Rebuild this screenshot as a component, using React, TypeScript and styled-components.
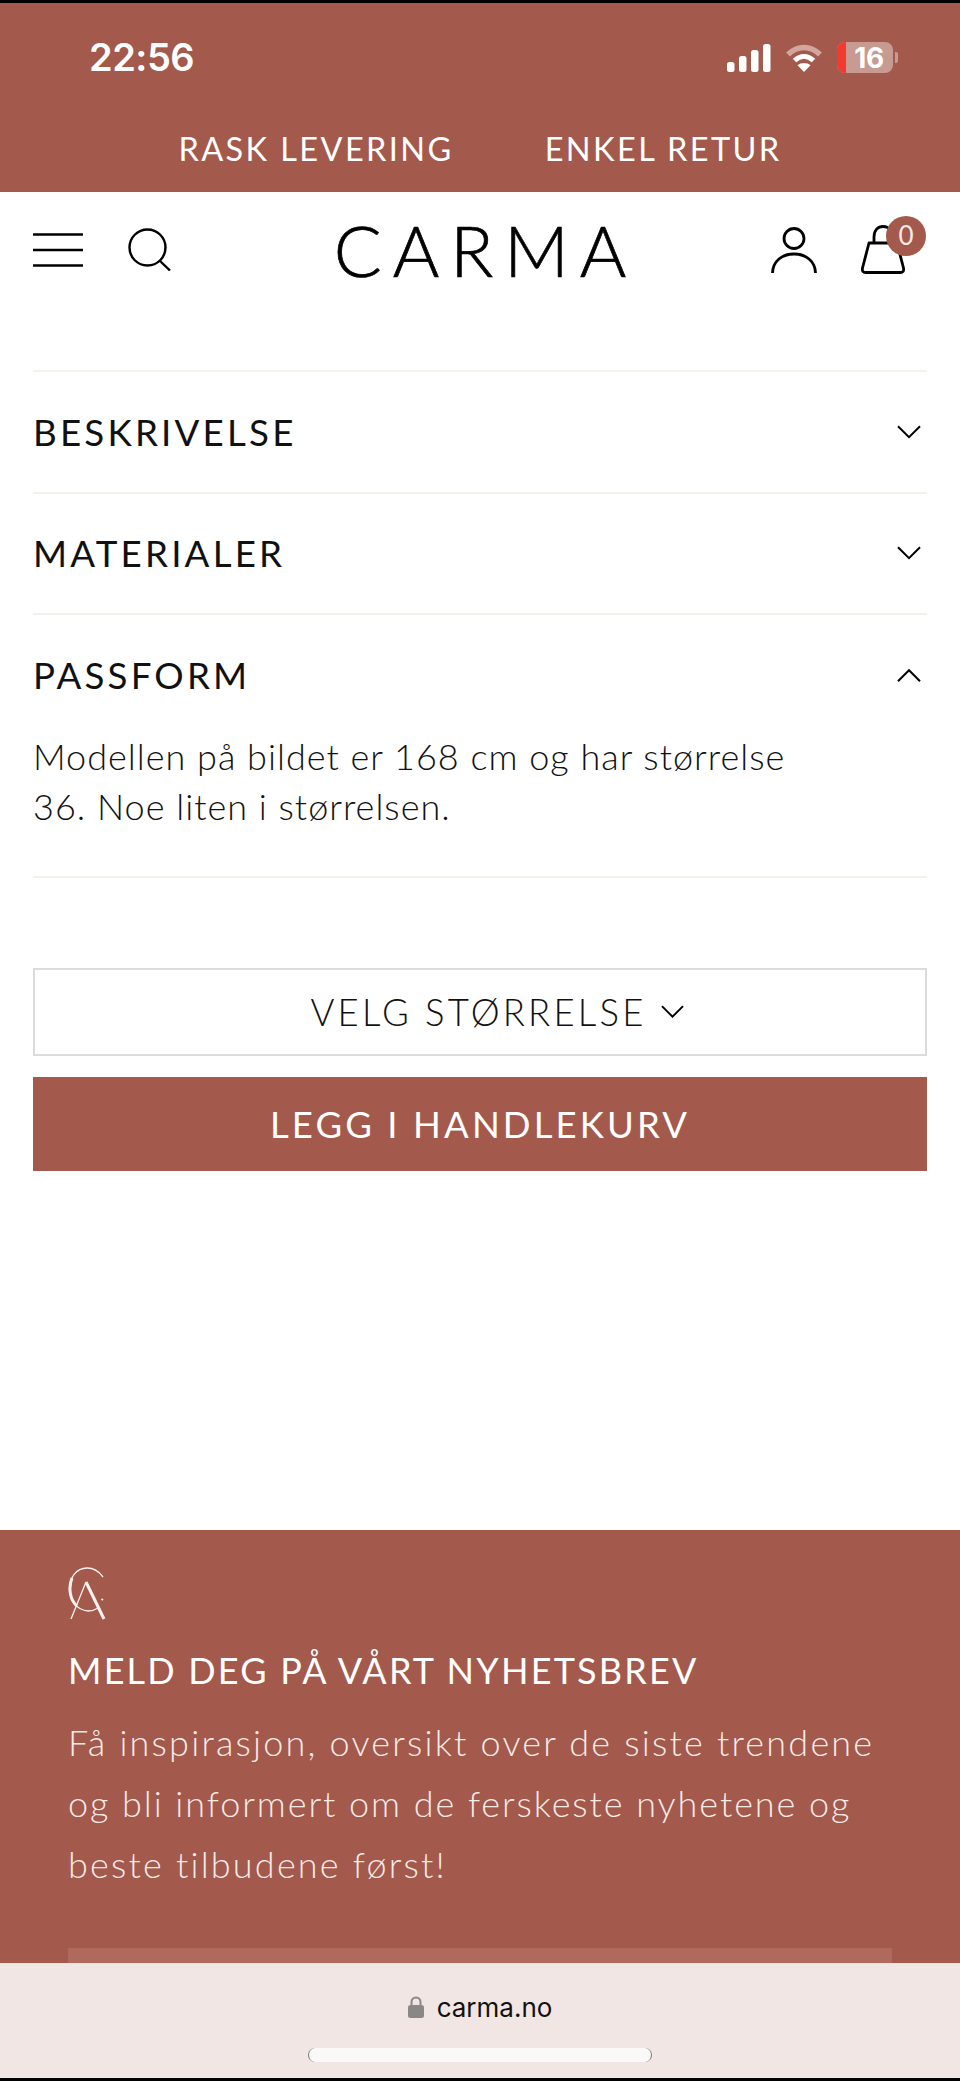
import React from "react";
import styled, { createGlobalStyle } from "styled-components";

const Global = createGlobalStyle`
  html, body { margin: 0; padding: 0; background: #fff; }
  * { box-sizing: border-box; }
  body { font-family: "Lato", "Liberation Sans", sans-serif; }
`;

const BRAND = "#a3594c";

const Page = styled.div`
  position: relative;
  width: 960px;
  height: 2081px;
  overflow: hidden;
  background: #fff;
  border-top: 3px solid #000;
  border-bottom: 3px solid #000;
`;

const TopBand = styled.div`
  height: 189px;
  background: ${BRAND};
  color: #fff;
  display: flex;
  flex-direction: column;
`;

const StatusBar = styled.div`
  height: 116px;
  padding: 0 62px 0 89px;
  display: flex;
  align-items: center;
  justify-content: space-between;
`;

const Time = styled.div`
  font-family: "Inter", "Liberation Sans", sans-serif;
  font-weight: 600;
  font-size: 38px;
  letter-spacing: -0.5px;
  line-height: 1;
  margin-top: -8px;
`;

const StatusIcons = styled.div`
  display: flex;
  align-items: center;
  margin-top: -7px;
  gap: 14px;
`;

const Battery = styled.div`
  position: relative;
  width: 56px;
  height: 31px;
  border-radius: 8px;
  background: #c79a92;
  overflow: hidden;
  display: flex;
  align-items: center;
  justify-content: center;
  font-family: "Inter", "Liberation Sans", sans-serif;
  font-weight: 700;
  font-size: 28px;
  color: #fff;
  padding-left: 8px;
  letter-spacing: -0.5px;
`;

const BatteryLevel = styled.span`
  position: absolute;
  left: 0;
  top: 0;
  bottom: 0;
  width: 9px;
  background: #f23a30;
`;

const BatteryNub = styled.span`
  width: 3px;
  height: 11px;
  margin-left: -12px;
  border-radius: 0 2px 2px 0;
  background: #c79a92;
`;

const Promos = styled.div`
  display: flex;
  justify-content: center;
  gap: 91px;
  margin-top: 10px;
  font-size: 32.5px;
  font-weight: 400;
  letter-spacing: 2.4px;
  line-height: 40px;
  white-space: nowrap;
`;

const Header = styled.header`
  height: 97px;
  padding: 18px 33px 0;
  display: grid;
  grid-template-columns: 1fr auto 1fr;
  align-items: center;
`;

const HeaderSide = styled.div<{ $end?: boolean }>`
  display: flex;
  align-items: center;
  justify-content: ${(p) => (p.$end ? "flex-end" : "flex-start")};
  gap: ${(p) => (p.$end ? "44px" : "45px")};
  color: #000;
`;

const Logo = styled.div`
  font-family: "Lato", sans-serif;
  font-weight: 300;
  font-size: 71px;
  line-height: 70px;
  letter-spacing: 11px;
  padding-left: 11px;
  color: #000;
  -webkit-text-stroke: 0.7px #000;
`;

const Bag = styled.div`
  position: relative;
  width: 44px;
  height: 50px;
  margin-right: 22px;
`;

const Badge = styled.span`
  position: absolute;
  left: 25px;
  top: -9px;
  width: 40px;
  height: 40px;
  border-radius: 50%;
  background: ${BRAND};
  color: #f6e9e6;
  font-size: 26px;
  line-height: 38px;
  text-align: center;
`;

const Accordion = styled.section`
  margin: 81px 33px 0;
  border-top: 2px solid #f6f3ee;
`;

const AccordionItem = styled.div`
  border-bottom: 2px solid #f4f1ec;
`;

const AccordionHead = styled.div`
  height: 119.5px;
  display: flex;
  align-items: center;
  justify-content: space-between;
  padding-right: 6px;
  font-size: 36.7px;
  font-weight: 400;
  letter-spacing: 3.2px;
  color: #111;
`;

const AccordionBody = styled.p`
  margin: -4px 0 0;
  padding-bottom: 45px;
  font-size: 36px;
  font-weight: 300;
  line-height: 50px;
  letter-spacing: 1px;
  color: #111;
  white-space: nowrap;
`;

const SizeSelect = styled.div`
  margin: 90px 33px 0;
  height: 88px;
  padding-left: 34px;
  border: 2px solid #dcdcdc;
  display: flex;
  align-items: center;
  justify-content: center;
  gap: 14px;
  font-size: 36.5px;
  font-weight: 300;
  letter-spacing: 3.2px;
  color: #111;
`;

const AddToCart = styled.div`
  margin: 21px 33px 0;
  height: 94px;
  background: ${BRAND};
  color: #fff;
  display: flex;
  align-items: center;
  justify-content: center;
  font-size: 36.5px;
  font-weight: 400;
  letter-spacing: 3.1px;
`;

const Footer = styled.footer`
  margin-top: 359px;
  height: 560px;
  padding: 36px 68px 0;
  background: ${BRAND};
  color: #fff;
`;

const FooterTitle = styled.h2`
  margin: 25px 0 0;
  font-size: 36px;
  font-weight: 400;
  line-height: 44px;
  letter-spacing: 2.2px;
  white-space: nowrap;
`;

const FooterText = styled.div`
  margin-top: 20px;
  font-size: 36px;
  font-weight: 300;
  color: #f7ebe8;
  white-space: nowrap;
`;

const FooterLine = styled.p<{ $spacing?: number }>`
  margin: 0;
  line-height: 61px;
  letter-spacing: ${(p) => p.$spacing ?? 2.2}px;
`;

const EmailField = styled.div`
  margin-top: 53px;
  height: 70px;
  background: #b0695d;
`;

const BrowserBar = styled.div`
  position: absolute;
  left: 0;
  right: 0;
  bottom: 0;
  height: 115px;
  background: #f2e6e4;
  display: flex;
  flex-direction: column;
  align-items: center;
`;

const Address = styled.div`
  margin-top: 25px;
  height: 38px;
  display: flex;
  align-items: center;
  gap: 13px;
  font-family: "Inter", "Liberation Sans", sans-serif;
  font-size: 26px;
  color: #111;
`;

const HomeIndicator = styled.div`
  margin-top: 22px;
  width: 344px;
  height: 14px;
  border-radius: 7px;
  background: #fbf9f8;
  border-left: 1px solid #777;
  border-right: 1px solid #777;
`;

const Chevron = ({ up, size = 24 }: { up?: boolean; size?: number }) => (
  <svg width={size} height={size * 0.6} viewBox="0 0 24 14" fill="none" stroke="#000" strokeWidth="2">
    <path d={up ? "M1 13 12 2l11 11" : "M1 1l11 11L23 1"} />
  </svg>
);

const Signal = () => (
  <svg width="44" height="28" viewBox="0 0 44 28" fill="#fff">
    <rect x="0" y="18" width="7.5" height="10" rx="2.5" />
    <rect x="12" y="12" width="7.5" height="16" rx="2.5" />
    <rect x="24" y="6" width="7.5" height="22" rx="2.5" />
    <rect x="36" y="0" width="7.5" height="28" rx="2.5" />
  </svg>
);

const Wifi = () => (
  <svg width="38" height="28" viewBox="0 0 38 28" fill="none">
    <path d="M3 10.5C12.5 1 25.5 1 35 10.5" stroke="#d2a69f" strokeWidth="5.5" />
    <path d="M9.5 16.5c5.8-5.5 13.2-5.5 19 0" stroke="#fff" strokeWidth="5" />
    <path d="M19 28l-6.5-6.8c3.8-3 9.2-3 13 0z" fill="#fff" />
  </svg>
);

const Menu = () => (
  <svg width="50" height="34" viewBox="0 0 50 34" stroke="#000" strokeWidth="2.4">
    <path d="M0 1.5h50M0 17h50M0 32.5h50" />
  </svg>
);

const Search = () => (
  <svg width="43" height="43" viewBox="0 0 43 43" fill="none" stroke="#000" strokeWidth="2.4">
    <circle cx="19.5" cy="19.5" r="18" />
    <path d="M32 33l10 9.5" />
  </svg>
);

const User = () => (
  <svg width="46" height="46" viewBox="0 0 46 46" fill="none" stroke="#000" strokeWidth="2.8">
    <circle cx="23" cy="11.5" r="10" />
    <path d="M1.5 46C2 34 11 27 23 27s21 7 21.5 19" />
  </svg>
);

const BagIcon = () => (
  <svg width="44" height="50" viewBox="0 0 44 50" fill="none" stroke="#000" strokeWidth="2.8" strokeLinejoin="round">
    <path d="M8 18h28l6.5 25c.6 3-.7 4.5-3 4.5H4.5c-2.3 0-3.6-1.5-3-4.5z" />
    <path d="M13 18v-6C13 5 17 1.5 22 1.5S31 5 31 12v6" />
  </svg>
);

const Monogram = () => (
  <svg width="40" height="54" viewBox="0 0 40 54" fill="none" stroke="#fbf1ef">
    <path d="M35 11C30 4 24 2 19 2 8 2 1.5 12 1.5 23c0 12 7.5 21 18.5 22 4 0 7-1 10-3" strokeWidth="1.3" />
    <path d="M4 12C0 22 2 34 9 40" strokeWidth="3" />
    <path d="M3 53L18 16" strokeWidth="1.3" />
    <path d="M18 16l18 37" strokeWidth="3" />
    <path d="M33.5 33l1.5 1" strokeWidth="2" />
  </svg>
);

const Lock = () => (
  <svg width="16" height="22" viewBox="0 0 16 22">
    <path d="M3.5 10V6a4.5 4.5 0 0 1 9 0v4" fill="none" stroke="#8a8787" strokeWidth="2" />
    <rect x="0" y="9" width="16" height="13" rx="2.5" fill="#8a8787" />
  </svg>
);

export default function App() {
  return (
    <Page>
      <Global />
      <TopBand>
        <StatusBar>
          <Time>22:56</Time>
          <StatusIcons>
            <Signal />
            <Wifi />
            <Battery>
              <BatteryLevel />
              16
            </Battery>
            <BatteryNub />
          </StatusIcons>
        </StatusBar>
        <Promos>
          <span>RASK LEVERING</span>
          <span>ENKEL RETUR</span>
        </Promos>
      </TopBand>
      <Header>
        <HeaderSide>
          <Menu />
          <Search />
        </HeaderSide>
        <Logo>CARMA</Logo>
        <HeaderSide $end>
          <User />
          <Bag>
            <BagIcon />
            <Badge>0</Badge>
          </Bag>
        </HeaderSide>
      </Header>
      <Accordion>
        <AccordionItem>
          <AccordionHead>
            BESKRIVELSE
            <Chevron />
          </AccordionHead>
        </AccordionItem>
        <AccordionItem>
          <AccordionHead>
            MATERIALER
            <Chevron />
          </AccordionHead>
        </AccordionItem>
        <AccordionItem>
          <AccordionHead>
            PASSFORM
            <Chevron up />
          </AccordionHead>
          <AccordionBody>
            Modellen på bildet er 168 cm og har størrelse
            <br />
            36. Noe liten i størrelsen.
          </AccordionBody>
        </AccordionItem>
      </Accordion>
      <SizeSelect>
        VELG STØRRELSE
        <Chevron size={23} />
      </SizeSelect>
      <AddToCart>LEGG I HANDLEKURV</AddToCart>
      <Footer>
        <Monogram />
        <FooterTitle>MELD DEG PÅ VÅRT NYHETSBREV</FooterTitle>
        <FooterText>
          <FooterLine>Få inspirasjon, oversikt over de siste trendene</FooterLine>
          <FooterLine $spacing={1.93}>og bli informert om de ferskeste nyhetene og</FooterLine>
          <FooterLine>beste tilbudene først!</FooterLine>
        </FooterText>
        <EmailField />
      </Footer>
      <BrowserBar>
        <Address>
          <Lock />
          carma.no
        </Address>
        <HomeIndicator />
      </BrowserBar>
    </Page>
  );
}
